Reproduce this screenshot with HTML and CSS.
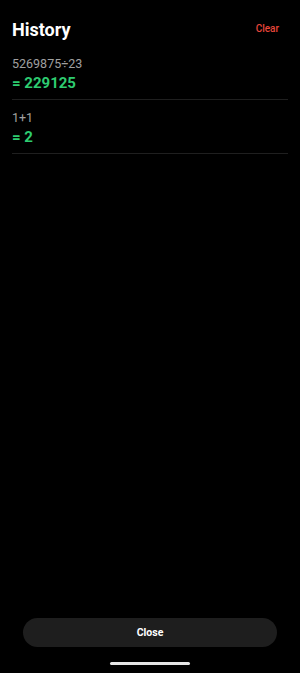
FILE: index.html
```html
<!DOCTYPE html>
<html>
<head>
<meta charset="utf-8">
<link rel="stylesheet" href="styles.css">
</head>
<body>
<div class="screen">
  <div class="header">
    <h1 class="title">History</h1>
    <button class="clear">Clear</button>
  </div>
  <div class="list">
    <div class="item">
      <div class="expr">5269875÷23</div>
      <div class="result">= 229125</div>
    </div>
    <div class="item">
      <div class="expr">1+1</div>
      <div class="result">= 2</div>
    </div>
  </div>
  <div class="footer">
    <button class="close">Close</button>
  </div>
  <div class="home"></div>
</div>
</body>
</html>
```

FILE: styles.css
```css
html, body {
  margin: 0;
  padding: 0;
  background: #000;
}
body {
  font-family: Roboto, "Noto Sans", sans-serif;
  color: #fff;
}
.screen {
  height: 673px;
  box-sizing: border-box;
  padding: 18px 0 8px;
  display: flex;
  flex-direction: column;
}
.header {
  display: flex;
  justify-content: space-between;
  align-items: flex-start;
  padding: 0 12px;
  height: 24px;
  margin-bottom: 4px;
}
.title {
  margin: 0;
  font-size: 18px;
  line-height: 24px;
  font-weight: 700;
  color: #fff;
}
.clear {
  margin-top: 1px;
  padding: 4px 9px;
  border: 0;
  background: none;
  font-family: inherit;
  font-size: 10px;
  line-height: 12px;
  font-weight: 500;
  color: #e8463a;
}
.list {
  flex: 1;
  padding: 0 12px;
}
.item {
  padding: 10px 0 6px;
  border-bottom: 1px solid #1f1f1f;
}
.expr {
  font-size: 12.5px;
  line-height: 16px;
  color: #a0a0a0;
}
.result {
  margin-top: 1px;
  font-size: 15px;
  line-height: 20px;
  font-weight: 700;
  color: #2ecc71;
}
.footer {
  padding: 0 23px;
}
.close {
  display: block;
  width: 100%;
  height: 29px;
  border: 0;
  border-radius: 15px;
  background: #1e1e1e;
  color: #fff;
  font-family: inherit;
  font-size: 10.5px;
  font-weight: 700;
}
.home {
  align-self: center;
  width: 80px;
  height: 3px;
  border-radius: 2px;
  background: #e6e6e6;
  margin-top: 15px;
}
```
